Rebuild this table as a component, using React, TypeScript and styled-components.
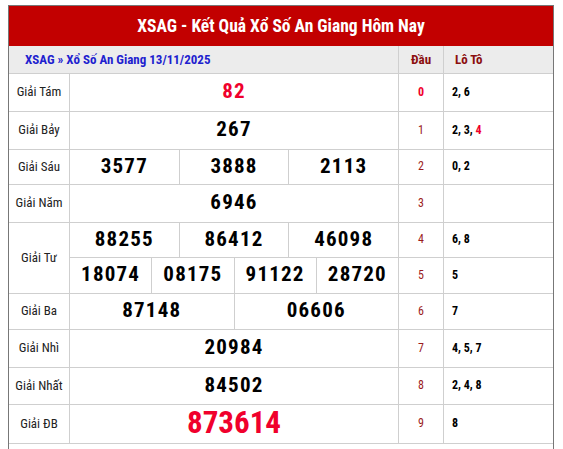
import React from "react";
import styled, { createGlobalStyle } from "styled-components";

const GlobalStyle = createGlobalStyle`
  html, body { background: #fff; }
  body {
    margin: 5px 0 0 8px;
    font-family: "Roboto Condensed", Roboto, "Liberation Sans", sans-serif;
    font-stretch: 75%;
  }
`;

const Frame = styled.div`
  width: 544px;
  border: 1px solid #777;
  border-bottom: none;
  background: #fff;
  padding-bottom: 5px;
`;

const Title = styled.h1`
  margin: 0;
  height: 40px;
  background: #c20000;
  color: #fff;
  font-size: 17.5px;
  font-weight: 700;
  display: flex;
  align-items: center;
  justify-content: center;
`;

const Table = styled.div`
  display: grid;
  grid-template-columns: 60px 328px 44px 1fr;
  grid-template-rows: 27px 37px 37px 34px 37px 34px 35px 35px 37px 36px 38px;
  gap: 1px;
  background: #cfcfcf;
  border-bottom: 1px solid #cfcfcf;
`;

const HeadCell = styled.div<{ $span?: number; $align?: "left" | "center" }>`
  grid-column: span ${(p) => p.$span || 1};
  background: #ececec;
  display: flex;
  align-items: center;
  justify-content: ${(p) => (p.$align === "center" ? "center" : "flex-start")};
  padding-left: ${(p) => (p.$align === "center" ? 0 : p.$span ? 16 : 11)}px;
  font-size: 13px;
  font-weight: 700;
  color: #8b0f0f;
`;

const Crumb = styled.span`
  color: #1f1fcf;
`;

const Label = styled.div<{ $rows?: number }>`
  grid-row: span ${(p) => p.$rows || 1};
  background: #fff;
  display: flex;
  align-items: center;
  justify-content: center;
  padding-bottom: 2px;
  font-size: 13px;
  color: #222;
`;

const Numbers = styled.div`
  display: flex;
  gap: 1px;
  background: #cfcfcf;
`;

const Num = styled.div<{ $red?: boolean; $big?: boolean }>`
  flex: 1;
  background: #fff;
  display: flex;
  align-items: center;
  justify-content: center;
  padding-bottom: ${(p) => (p.$big ? 4 : 3)}px;
  font-weight: 700;
  font-size: ${(p) => (p.$big ? 31 : 21)}px;
  letter-spacing: ${(p) => (p.$big ? 0 : 1.2)}px;
  color: ${(p) => (p.$red ? "#f0002c" : "#000")};
`;

const Dau = styled.div<{ $hot?: boolean }>`
  background: #fff;
  display: flex;
  align-items: center;
  justify-content: center;
  padding-bottom: 2px;
  font-size: 12px;
  font-weight: ${(p) => (p.$hot ? 700 : 400)};
  color: ${(p) => (p.$hot ? "#f0002c" : "#9b1c1c")};
`;

const Loto = styled.div`
  background: #fff;
  display: flex;
  align-items: center;
  padding: 0 0 2px 8px;
  font-size: 12px;
  font-weight: 700;
  color: #000;
  white-space: pre;
`;

const Hot = styled.span`
  color: #f0002c;
`;

type Row = {
  label?: string;
  span?: number;
  nums: string[];
  red?: boolean;
  big?: boolean;
  dau: string;
  loto: React.ReactNode;
};

const rows: Row[] = [
  { label: "Giải Tám", nums: ["82"], red: true, dau: "0", loto: "2, 6" },
  {
    label: "Giải Bảy",
    nums: ["267"],
    dau: "1",
    loto: (
      <>
        {"2, 3, "}
        <Hot>4</Hot>
      </>
    ),
  },
  { label: "Giải Sáu", nums: ["3577", "3888", "2113"], dau: "2", loto: "0, 2" },
  { label: "Giải Năm", nums: ["6946"], dau: "3", loto: "" },
  { label: "Giải Tư", span: 2, nums: ["88255", "86412", "46098"], dau: "4", loto: "6, 8" },
  { nums: ["18074", "08175", "91122", "28720"], dau: "5", loto: "5" },
  { label: "Giải Ba", nums: ["87148", "06606"], dau: "6", loto: "7" },
  { label: "Giải Nhì", nums: ["20984"], dau: "7", loto: "4, 5, 7" },
  { label: "Giải Nhất", nums: ["84502"], dau: "8", loto: "2, 4, 8" },
  { label: "Giải ĐB", nums: ["873614"], red: true, big: true, dau: "9", loto: "8" },
];

export default function App() {
  return (
    <>
      <GlobalStyle />
      <Frame>
        <Title>XSAG - Kết Quả Xổ Số An Giang Hôm Nay</Title>
        <Table>
          <HeadCell $span={2}>
            <Crumb>XSAG » Xổ Số An Giang 13/11/2025</Crumb>
          </HeadCell>
          <HeadCell $align="center">Đầu</HeadCell>
          <HeadCell>Lô Tô</HeadCell>
          {rows.map((r, i) => (
            <React.Fragment key={i}>
              {r.label && <Label $rows={r.span}>{r.label}</Label>}
              <Numbers>
                {r.nums.map((n) => (
                  <Num key={n} $red={r.red} $big={r.big}>
                    {n}
                  </Num>
                ))}
              </Numbers>
              <Dau $hot={r.dau === "0"}>{r.dau}</Dau>
              <Loto>{r.loto}</Loto>
            </React.Fragment>
          ))}
        </Table>
      </Frame>
    </>
  );
}
